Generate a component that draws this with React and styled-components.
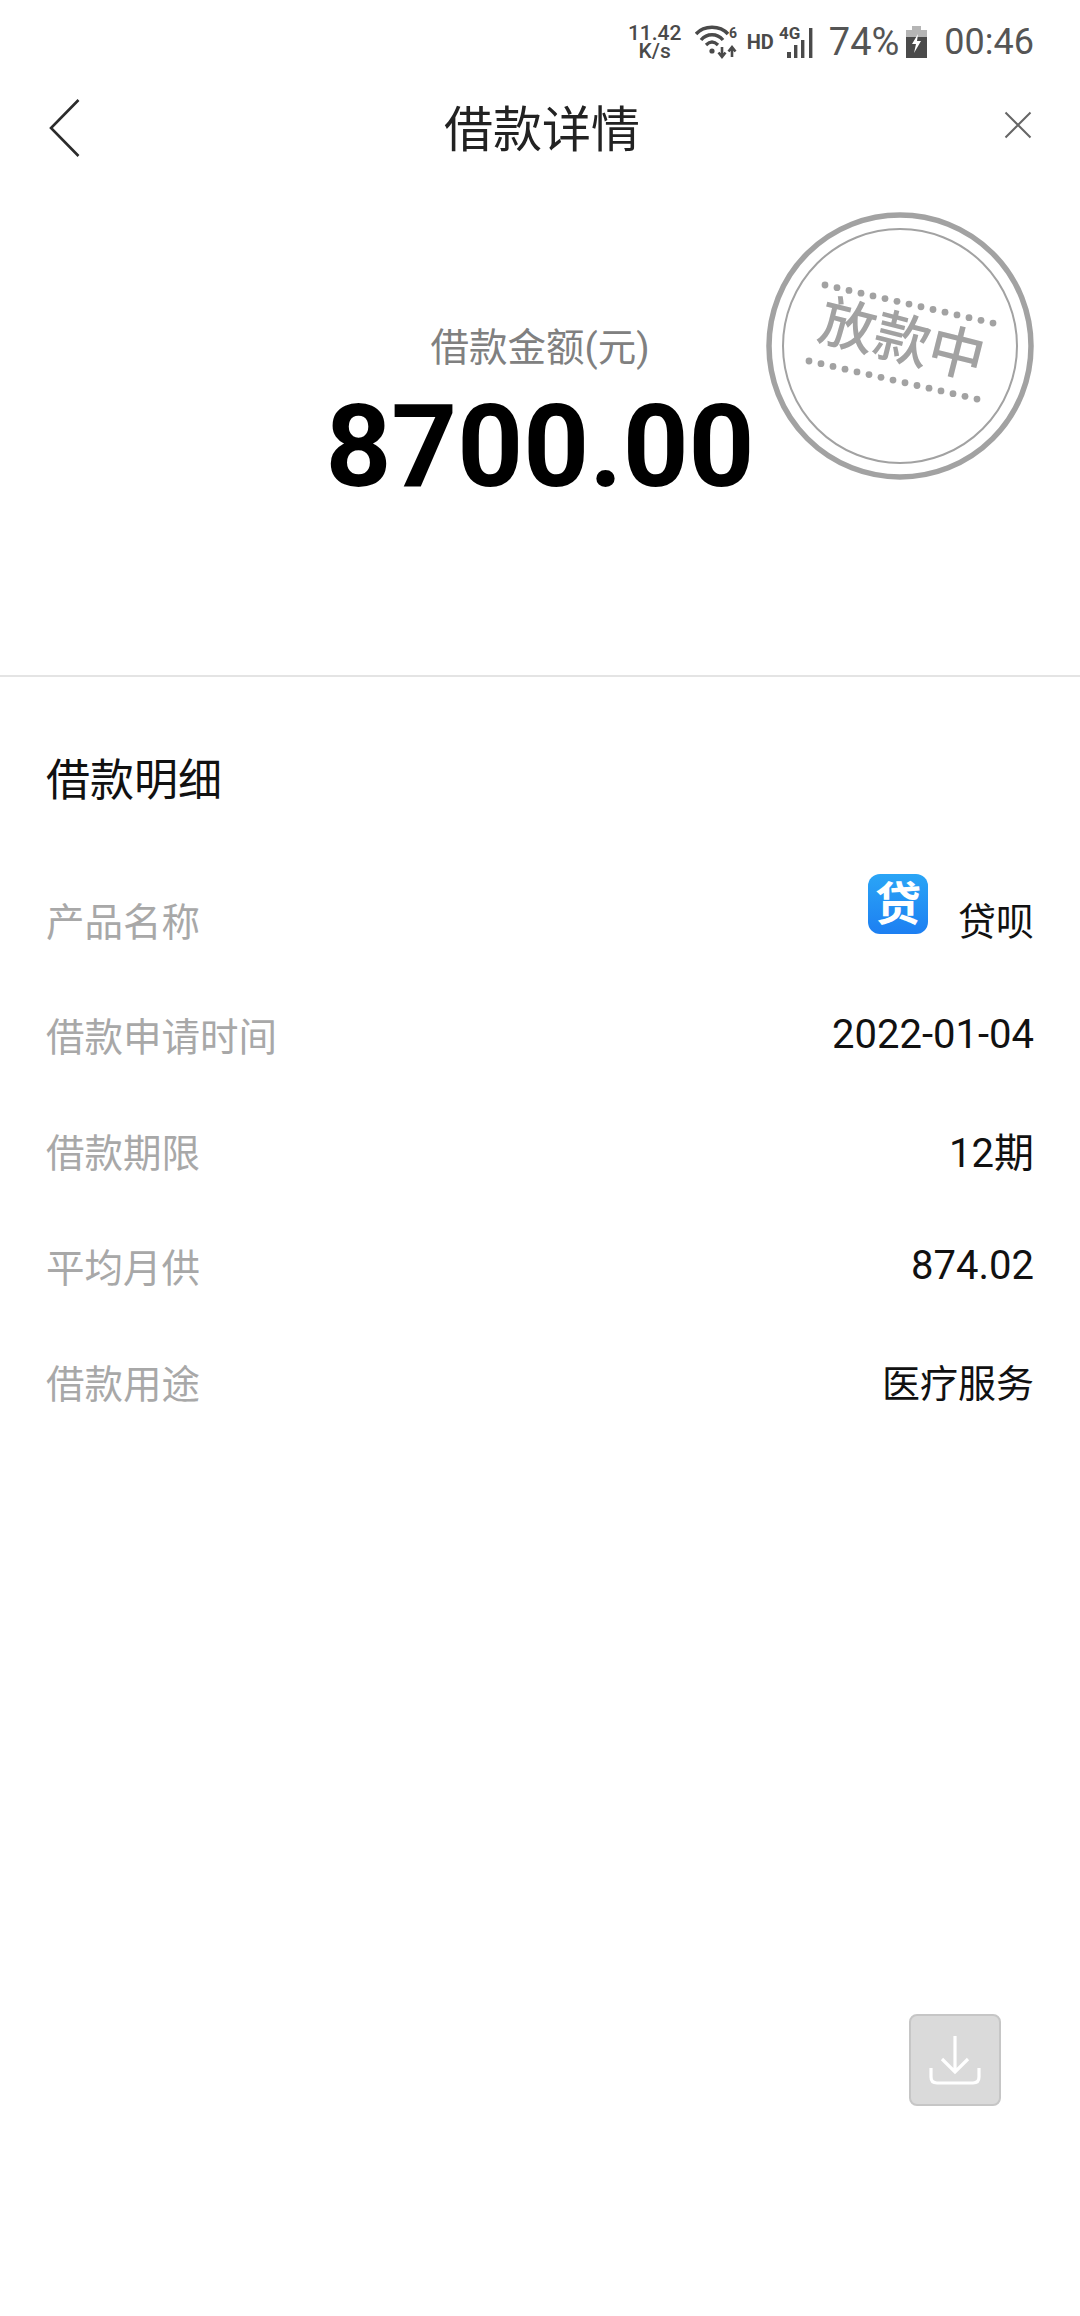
import React from 'react'
import styled, {createGlobalStyle} from 'styled-components'

const rows = [
    {label: '借款申请时间', value: '2022-01-04', digits: true},
    {label: '借款期限', value: '12期', digits: true},
    {label: '平均月供', value: '874.02', digits: true},
    {label: '借款用途', value: '医疗服务'},
]

const dotIndexes = Array.from({length: 15}, (_, i) => i)

function WifiIcon() {
    return (
        <svg width="42" height="36" viewBox="0 0 42 36" fill="none">
            <path d="M1 10 C9 1 25 1 33 10" stroke="#4a4a4a" strokeWidth="3.4" />
            <path d="M6 16 C12 9 22 9 28 16" stroke="#4a4a4a" strokeWidth="3.4" />
            <path d="M11 21 C15 17 19 17 23 21" stroke="#4a4a4a" strokeWidth="3.2" />
            <circle cx="17" cy="27" r="2.6" fill="#4a4a4a" />
            <path d="M27 23 V32 M23.5 28.5 L27 33 L30.5 28.5" stroke="#4a4a4a" strokeWidth="2.6" />
            <path d="M37 33 V24 M33.5 27.5 L37 23 L40.5 27.5" stroke="#4a4a4a" strokeWidth="2.6" />
            <text x="34" y="14" fontSize="14" fontWeight="700" fill="#4a4a4a" fontFamily="Roboto, sans-serif">6</text>
        </svg>
    )
}

function SignalIcon() {
    return (
        <svg width="37" height="38" viewBox="0 -2 37 38">
            <text x="0" y="14" fontSize="17" fontWeight="700" fill="#4a4a4a" fontFamily="Roboto, sans-serif">4G</text>
            <rect x="8" y="27" width="4" height="6" fill="#4a4a4a" />
            <rect x="15" y="20" width="3.4" height="13" fill="#4a4a4a" />
            <rect x="22" y="15" width="3.4" height="18" fill="#4a4a4a" />
            <rect x="30" y="3" width="3.4" height="30" fill="#4a4a4a" />
        </svg>
    )
}

function BatteryIcon() {
    return (
        <svg width="21" height="32" viewBox="0 0 21 32">
            <rect x="6" y="0" width="9" height="4" fill="#b5b5b5" />
            <rect x="0" y="4" width="21" height="7" fill="#b5b5b5" />
            <rect x="0" y="11" width="21" height="21" fill="#4a4a4a" />
            <path d="M12 8 L6 18 H10 L8 27 L15 15 H11 Z" fill="#fff" />
        </svg>
    )
}

function Stamp() {
    return (
        <StampWrap>
            <svg width="272" height="272" viewBox="0 0 272 272" fill="none">
                <circle cx="136" cy="136" r="131" stroke="#a2a2a2" strokeWidth="5.5" />
                <circle cx="136" cy="136" r="117" stroke="#a2a2a2" strokeWidth="2" />
                {dotIndexes.map((i) => (
                    <g key={i} fill="#a2a2a2">
                        <circle cx={61 + i * 12} cy={75 + i * 2.72} r="3.4" />
                        <circle cx={45 + i * 12} cy={151 + i * 2.72} r="3.4" />
                    </g>
                ))}
                <text
                    x="138"
                    y="149"
                    textAnchor="middle"
                    fontSize="56"
                    fontWeight="500"
                    fill="#a2a2a2"
                    fontFamily="'Noto Sans CJK SC', sans-serif"
                    transform="rotate(14 136 130)"
                >放款中</text>
            </svg>
        </StampWrap>
    )
}

function App() {
    return (
        <Page>
            <GlobalStyle />
            <StatusBar>
                <Speed>11.42<br />K/s</Speed>
                <WifiIcon />
                <Hd>HD</Hd>
                <SignalIcon />
                <StatusText>74%</StatusText>
                <BatteryIcon />
                <Clock>00:46</Clock>
            </StatusBar>
            <Nav>
                <svg width="31" height="58" viewBox="0 0 31 58" fill="none">
                    <path d="M29.5 1 L2 29 L29.5 57" stroke="#2b2b2b" strokeWidth="2.6" />
                </svg>
                <Title>借款详情</Title>
                <CloseIcon width="28" height="28" viewBox="0 0 28 28" fill="none">
                    <path d="M1.5 1.5 L26.5 26.5 M26.5 1.5 L1.5 26.5" stroke="#666" strokeWidth="2" />
                </CloseIcon>
            </Nav>
            <Hero>
                <AmountLabel>借款金额(元)</AmountLabel>
                <Amount>8700.00</Amount>
                <Stamp />
            </Hero>
            <Detail>
                <SectionTitle>借款明细</SectionTitle>
                <Row>
                    <RowLabel>产品名称</RowLabel>
                    <Product>
                        <ProductLogo>贷</ProductLogo>
                        <RowValue>贷呗</RowValue>
                    </Product>
                </Row>
                {rows.map((row) => (
                    <Row key={row.label}>
                        <RowLabel>{row.label}</RowLabel>
                        <RowValue $digits={row.digits}>{row.value}</RowValue>
                    </Row>
                ))}
            </Detail>
            <DownloadBtn>
                <svg width="52" height="50" viewBox="0 0 52 50" fill="none">
                    <path d="M26 1 V37 M13 24 L26 37 L39 24" stroke="#fff" strokeWidth="3.2" />
                    <path d="M2 33 V42 Q2 48 8 48 H44 Q50 48 50 42 V33" stroke="#fff" strokeWidth="3.2" />
                </svg>
            </DownloadBtn>
        </Page>
    )
}

export default App

const GlobalStyle = createGlobalStyle`
    body {
        margin: 0;
        background: #fff;
        font-family: Roboto, "Noto Sans CJK SC", sans-serif;
    }
`

const Page = styled.div`
    position: relative;
    width: 1080px;
    height: 2316px;
    overflow: hidden;
    background: #fff;
`

const StatusBar = styled.div`
    height: 84px;
    padding-right: 46px;
    box-sizing: border-box;
    display: flex;
    align-items: center;
    justify-content: flex-end;
`

const Speed = styled.div`
    width: 54px;
    margin-right: 13px;
    font-size: 21px;
    font-weight: 500;
    line-height: 18px;
    text-align: center;
    color: #4a4a4a;
`

const Hd = styled.div`
    margin: 0 5px 0 10px;
    font-size: 20px;
    font-weight: 700;
    color: #4a4a4a;
`

const StatusText = styled.div`
    margin: 0 7px 0 13px;
    font-size: 38px;
    color: #555;
`

const Clock = styled.div`
    margin-left: 17px;
    font-size: 36px;
    color: #555;
`

const Nav = styled.div`
    height: 88px;
    padding: 0 48px 0 49px;
    display: flex;
    align-items: center;
    justify-content: space-between;
`

const Title = styled.div`
    margin-bottom: 6px;
    font-size: 49px;
    color: #222;
`

const CloseIcon = styled.svg`
    margin-bottom: 6px;
`

const Hero = styled.div`
    position: relative;
    height: 505px;
    box-sizing: border-box;
    padding-top: 146px;
    border-bottom: 2px solid #e4e4e4;
    display: flex;
    flex-direction: column;
    align-items: center;
`

const AmountLabel = styled.div`
    font-size: 38.5px;
    line-height: 60px;
    color: #808080;
`

const Amount = styled.div`
    margin-top: 4px;
    font-size: 115px;
    font-weight: 700;
    line-height: 130px;
    color: #000;
`

const StampWrap = styled.div`
    position: absolute;
    left: 764px;
    top: 38px;
    width: 272px;
    height: 272px;
`

const Detail = styled.div`
    padding: 71px 46px 0;
`

const SectionTitle = styled.div`
    font-size: 44px;
    line-height: 66px;
    margin-bottom: 47px;
    color: #111;
`

const Row = styled.div`
    height: 115.5px;
    display: flex;
    align-items: center;
    justify-content: space-between;
`

const RowLabel = styled.div`
    font-size: 38.5px;
    color: #a8a8a8;
`

const RowValue = styled.div`
    font-size: ${(props) => (props.$digits ? '40px' : '38px')};
    color: #111;
`

const Product = styled.div`
    display: flex;
    align-items: center;
    gap: 30px;
`

const ProductLogo = styled.div`
    width: 60px;
    height: 60px;
    margin-top: -30px;
    border-radius: 12px;
    background: linear-gradient(180deg, #2aa5f6, #1d7ff2);
    color: #fff;
    font-size: 46px;
    font-weight: 700;
    line-height: 60px;
    text-align: center;
`

const DownloadBtn = styled.div`
    position: absolute;
    left: 909px;
    top: 2014px;
    width: 92px;
    height: 92px;
    box-sizing: border-box;
    border: 2px solid #c6c6c6;
    border-radius: 8px;
    background: #dadada;
    display: flex;
    align-items: center;
    justify-content: center;
`
